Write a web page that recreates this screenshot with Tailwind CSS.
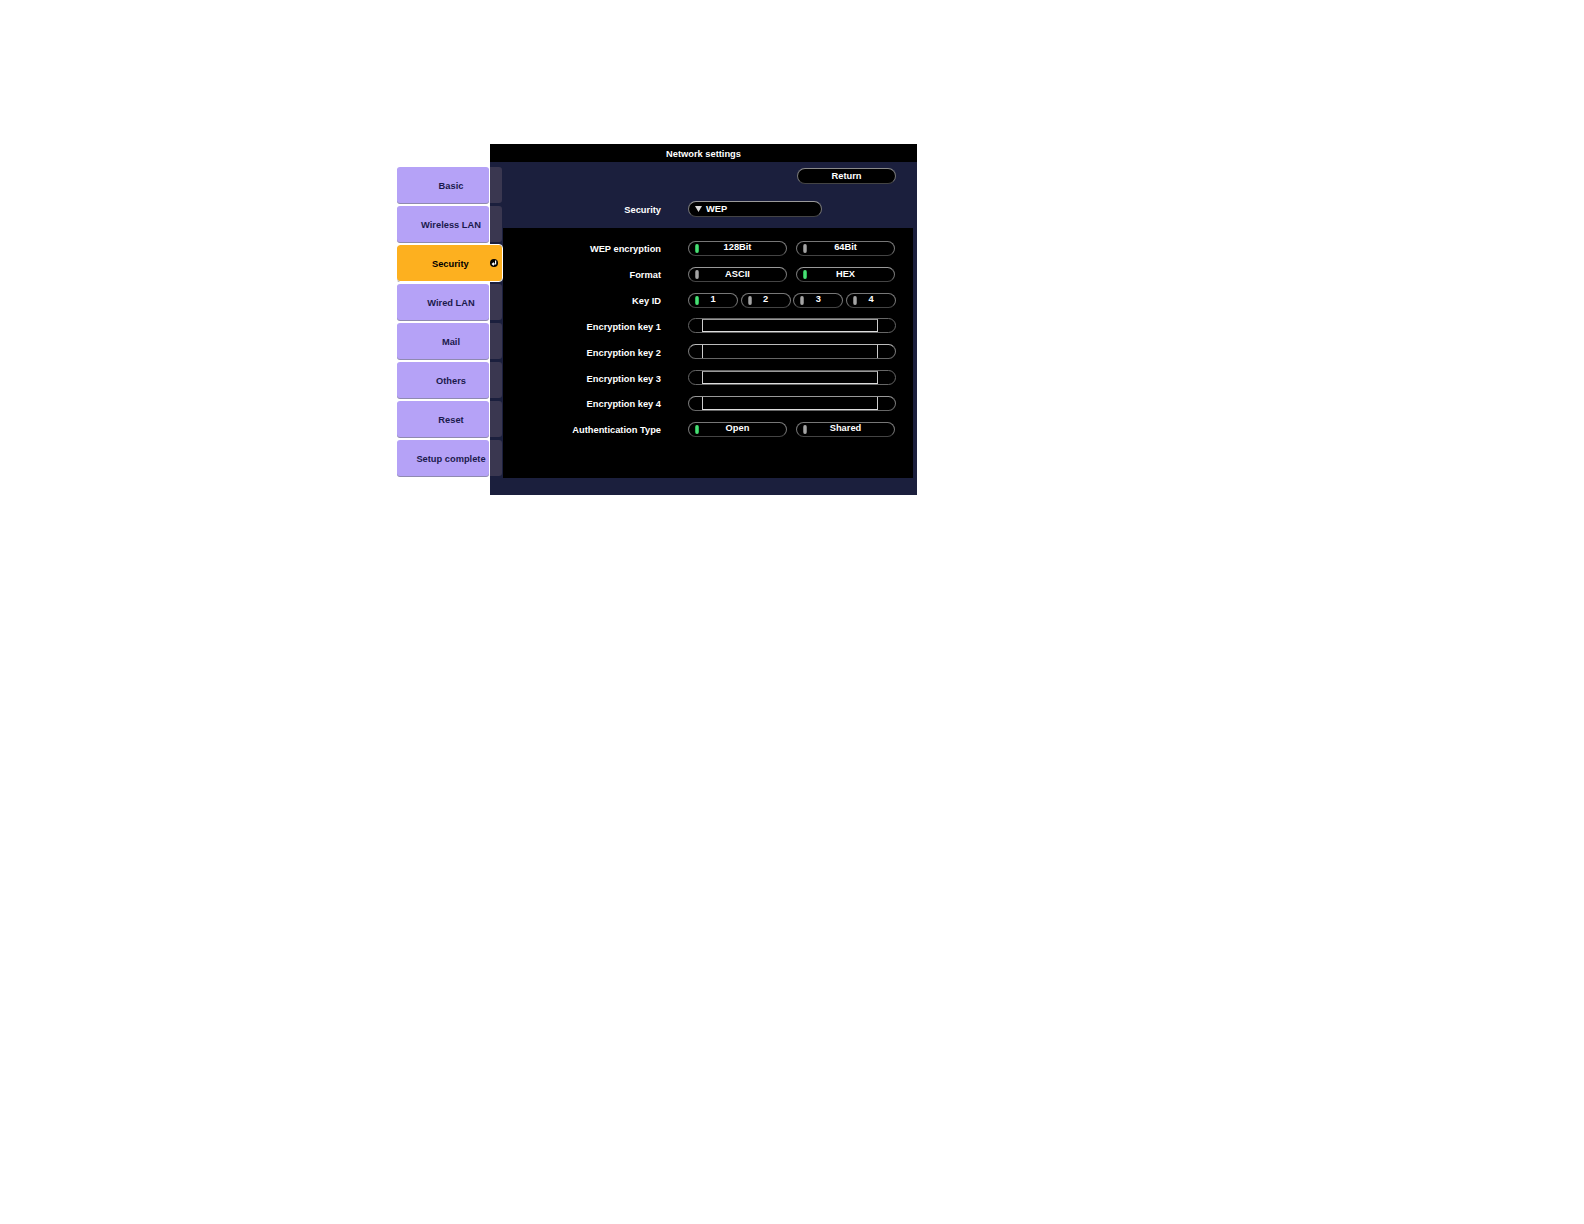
<!DOCTYPE html><html lang="en">
<head>
  <meta charset="UTF-8">
  <title>Network settings</title>
  <script src="https://cdn.jsdelivr.net/npm/@tailwindcss/browser@4"></script>
</head>
<body class="bg-white font-['Liberation_Sans',sans-serif] font-bold text-[9.300px] leading-none">
  <div class="flex pt-[144px] pl-[397px]">
    <!-- side tabs -->
    <div class="relative z-10 w-[105px] mr-[-12px] pt-[23px] flex flex-col gap-[3px] text-[#1b1a4d]">
      <div class="flex h-[36px]">
        <div class="w-[92px] mr-[1px] pl-[16px] pt-[4px] flex items-center justify-center bg-[#b5a2f7] rounded-[3px] shadow-[0_1px_0_#8f8ab0]">Basic</div>
        <div class="w-[12px] bg-[#3a3750] rounded-r-[3px]"></div>
      </div>
      <div class="flex h-[36px]">
        <div class="w-[92px] mr-[1px] pl-[16px] pt-[4px] flex items-center justify-center bg-[#b5a2f7] rounded-[3px] shadow-[0_1px_0_#8f8ab0]">Wireless LAN</div>
        <div class="w-[12px] bg-[#3a3750] rounded-r-[3px]"></div>
      </div>
      <div class="flex h-[36px] items-center justify-between pl-[35px] pr-[4px] bg-[#fdb01f] text-black rounded-[3px] outline-1 outline-white shadow-[0_1px_0_#3a3a3a]">
        <span class="pt-[4px]">Security</span>
        <svg class="w-[8px] h-[8px]" viewBox="0 0 8 8"><circle cx="4" cy="4" r="4" fill="#000"/><path d="M5.600 1.600V5H2.400M3.800 3.600 2.400 5l1.400 1.400" fill="none" stroke="#fff" stroke-width="1.200"/></svg>
      </div>
      <div class="flex h-[36px]">
        <div class="w-[92px] mr-[1px] pl-[16px] pt-[4px] flex items-center justify-center bg-[#b5a2f7] rounded-[3px] shadow-[0_1px_0_#8f8ab0]">Wired LAN</div>
        <div class="w-[12px] bg-[#3a3750] rounded-r-[3px]"></div>
      </div>
      <div class="flex h-[36px]">
        <div class="w-[92px] mr-[1px] pl-[16px] pt-[4px] flex items-center justify-center bg-[#b5a2f7] rounded-[3px] shadow-[0_1px_0_#8f8ab0]">Mail</div>
        <div class="w-[12px] bg-[#3a3750] rounded-r-[3px]"></div>
      </div>
      <div class="flex h-[36px]">
        <div class="w-[92px] mr-[1px] pl-[16px] pt-[4px] flex items-center justify-center bg-[#b5a2f7] rounded-[3px] shadow-[0_1px_0_#8f8ab0]">Others</div>
        <div class="w-[12px] bg-[#3a3750] rounded-r-[3px]"></div>
      </div>
      <div class="flex h-[36px]">
        <div class="w-[92px] mr-[1px] pl-[16px] pt-[4px] flex items-center justify-center bg-[#b5a2f7] rounded-[3px] shadow-[0_1px_0_#8f8ab0]">Reset</div>
        <div class="w-[12px] bg-[#3a3750] rounded-r-[3px]"></div>
      </div>
      <div class="flex h-[36px]">
        <div class="w-[92px] mr-[1px] pl-[16px] pt-[4px] flex items-center justify-center bg-[#b5a2f7] rounded-[3px] shadow-[0_1px_0_#8f8ab0]">Setup complete</div>
        <div class="w-[12px] bg-[#3a3750] rounded-r-[3px]"></div>
      </div>
    </div>

    <!-- main panel -->
    <div class="w-[427px] h-[351px] flex flex-col bg-[#1b1f3d] text-white rounded-tl-[2px]">
      <div class="h-[18px] bg-black flex items-center justify-center pt-[3px]">Network settings</div>
      <div class="h-[66px] pt-[6px] pr-[21px]">
        <div class="flex justify-end">
          <div class="w-[99px] h-[16px] pt-[1px] flex items-center justify-center bg-black rounded-full border border-t-[#8a8a8a] border-x-[#777] border-b-[#444]">Return</div>
        </div>
        <div class="flex items-center mt-[17px]">
          <div class="w-[171px] mr-[27px] text-right pt-[4px]">Security</div>
          <div class="w-[134px] h-[16px] pl-[6px] flex items-center gap-[4px] bg-black rounded-full border border-t-[#9a9a9a] border-x-[#777] border-b-[#444]">
            <svg class="w-[7px] h-[6px]" viewBox="0 0 7 6"><path d="M0 0h7L3.500 6z" fill="#d8d8d8"/></svg>
            <span class="pt-[1px]">WEP</span>
          </div>
        </div>
      </div>
      <div class="flex-1 bg-black ml-[13px] mr-[4px] pt-[13px] flex flex-col gap-[10.800px]">
        <div class="flex h-[15px]">
          <div class="w-[158px] mr-[27px] text-right pt-[4px]">WEP encryption</div>
          <div class="flex gap-[9px]">
            <div class="relative w-[99px] pb-[1px] flex items-center justify-center rounded-full border border-t-[#777] border-x-[#777] border-b-[#444]"><span class="absolute left-[6px] top-[2px] w-[4px] h-[9px] rounded-full bg-linear-to-r from-[#12a53f] via-[#5cf08a] to-[#12a53f]"></span>128Bit</div>
            <div class="relative w-[99px] pb-[1px] flex items-center justify-center rounded-full border border-t-[#777] border-x-[#777] border-b-[#444]"><span class="absolute left-[6px] top-[2px] w-[4px] h-[9px] rounded-full bg-linear-to-r from-[#666] via-[#bbb] to-[#666]"></span>64Bit</div>
          </div>
        </div>
        <div class="flex h-[15px]">
          <div class="w-[158px] mr-[27px] text-right pt-[4px]">Format</div>
          <div class="flex gap-[9px]">
            <div class="relative w-[99px] flex items-center justify-center rounded-full border border-t-[#999] border-x-[#777] border-b-[#444]"><span class="absolute left-[6px] top-[2px] w-[4px] h-[9px] rounded-full bg-linear-to-r from-[#666] via-[#bbb] to-[#666]"></span>ASCII</div>
            <div class="relative w-[99px] flex items-center justify-center rounded-full border border-t-[#999] border-x-[#777] border-b-[#444]"><span class="absolute left-[6px] top-[2px] w-[4px] h-[9px] rounded-full bg-linear-to-r from-[#12a53f] via-[#5cf08a] to-[#12a53f]"></span>HEX</div>
          </div>
        </div>
        <div class="flex h-[15px]">
          <div class="w-[158px] mr-[27px] text-right pt-[4px]">Key ID</div>
          <div class="flex gap-[2.670px]">
            <div class="relative w-[50px] flex items-center justify-center rounded-full border border-t-[#777] border-x-[#777] border-b-[#444]"><span class="absolute left-[6px] top-[2px] w-[4px] h-[9px] rounded-full bg-linear-to-r from-[#12a53f] via-[#5cf08a] to-[#12a53f]"></span>1</div>
            <div class="relative w-[50px] flex items-center justify-center rounded-full border border-t-[#777] border-x-[#777] border-b-[#444]"><span class="absolute left-[6px] top-[2px] w-[4px] h-[9px] rounded-full bg-linear-to-r from-[#666] via-[#bbb] to-[#666]"></span>2</div>
            <div class="relative w-[50px] flex items-center justify-center rounded-full border border-t-[#777] border-x-[#777] border-b-[#444]"><span class="absolute left-[6px] top-[2px] w-[4px] h-[9px] rounded-full bg-linear-to-r from-[#666] via-[#bbb] to-[#666]"></span>3</div>
            <div class="relative w-[50px] flex items-center justify-center rounded-full border border-t-[#777] border-x-[#777] border-b-[#444]"><span class="absolute left-[6px] top-[2px] w-[4px] h-[9px] rounded-full bg-linear-to-r from-[#666] via-[#bbb] to-[#666]"></span>4</div>
          </div>
        </div>
        <div class="flex h-[15px]">
          <div class="w-[158px] mr-[27px] text-right pt-[5px]">Encryption key 1</div>
          <div class="w-[208px] rounded-full border border-[#666] pl-[13px] pr-[17px]"><div class="h-full border border-t-[#999] border-x-[#ccc] border-b-[#ddd]"></div></div>
        </div>
        <div class="flex h-[15px]">
          <div class="w-[158px] mr-[27px] text-right pt-[5px]">Encryption key 2</div>
          <div class="w-[208px] rounded-full border border-t-[#bbb] border-x-[#777] border-b-[#666] pl-[13px] pr-[17px]"><div class="h-full border-x border-x-[#ccc]"></div></div>
        </div>
        <div class="flex h-[15px]">
          <div class="w-[158px] mr-[27px] text-right pt-[5px]">Encryption key 3</div>
          <div class="w-[208px] rounded-full border border-[#666] pl-[13px] pr-[17px]"><div class="h-full border border-t-[#999] border-x-[#ccc] border-b-[#ddd]"></div></div>
        </div>
        <div class="flex h-[15px]">
          <div class="w-[158px] mr-[27px] text-right pt-[4px]">Encryption key 4</div>
          <div class="w-[208px] rounded-full border border-t-[#999] border-x-[#777] border-b-[#666] pl-[13px] pr-[17px]"><div class="h-full border-x border-b border-x-[#ccc] border-b-[#ddd]"></div></div>
        </div>
        <div class="flex h-[15px]">
          <div class="w-[158px] mr-[27px] text-right pt-[4px]">Authentication Type</div>
          <div class="flex gap-[9px]">
            <div class="relative w-[99px] pb-[1px] flex items-center justify-center rounded-full border border-t-[#777] border-x-[#777] border-b-[#444]"><span class="absolute left-[6px] top-[2px] w-[4px] h-[9px] rounded-full bg-linear-to-r from-[#12a53f] via-[#5cf08a] to-[#12a53f]"></span>Open</div>
            <div class="relative w-[99px] pb-[1px] flex items-center justify-center rounded-full border border-t-[#777] border-x-[#777] border-b-[#444]"><span class="absolute left-[6px] top-[2px] w-[4px] h-[9px] rounded-full bg-linear-to-r from-[#666] via-[#bbb] to-[#666]"></span>Shared</div>
          </div>
        </div>
      </div>
      <div class="h-[17px]"></div>
    </div>
  </div>
</body>
</html>
